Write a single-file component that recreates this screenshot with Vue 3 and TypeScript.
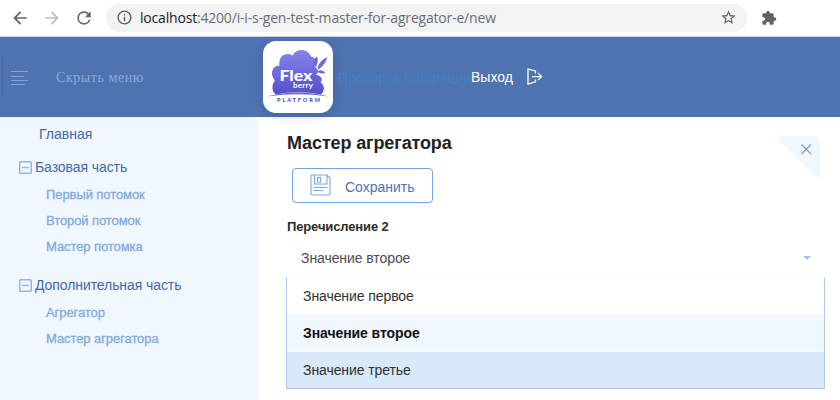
<script setup lang="ts">
interface MenuGroup {
  title: string
  key: string
  items: { label: string; key: string }[]
}

const groups: MenuGroup[] = [
  {
    title: 'Базовая часть',
    key: 'base',
    items: [
      { label: 'Первый потомок', key: 'first' },
      { label: 'Второй потомок', key: 'second' },
      { label: 'Мастер потомка', key: 'master' },
    ],
  },
  {
    title: 'Дополнительная часть',
    key: 'extra',
    items: [
      { label: 'Агрегатор', key: 'aggregator' },
      { label: 'Мастер агрегатора', key: 'aggregator-master' },
    ],
  },
]

const options = [
  { label: 'Значение первое', state: '' },
  { label: 'Значение второе', state: 'active' },
  { label: 'Значение третье', state: 'hovered' },
]
</script>

<template>
  <div class="window">
    <div class="toolbar">
      <svg class="nav-icon" viewBox="0 0 24 24"><path d="M20 11H7.83l5.59-5.59L12 4l-8 8 8 8 1.41-1.41L7.83 13H20z" /></svg>
      <svg class="nav-icon disabled" viewBox="0 0 24 24"><path d="M4 11h12.17l-5.59-5.59L12 4l8 8-8 8-1.41-1.41L16.17 13H4z" /></svg>
      <svg class="nav-icon" viewBox="0 0 24 24"><path d="M17.65 6.35A7.96 7.96 0 0 0 12 4a8 8 0 1 0 7.73 10h-2.08A6 6 0 1 1 12 6c1.66 0 3.14.69 4.22 1.78L13 11h7V4z" /></svg>
      <div class="address">
        <svg class="info" viewBox="0 0 24 24"><path d="M11 17h2v-6h-2v6zm1-15a10 10 0 1 0 0 20 10 10 0 0 0 0-20zm0 18a8 8 0 1 1 0-16 8 8 0 0 1 0 16zM11 9h2V7h-2v2z" /></svg>
        <span class="url"><b>localhost</b>:4200/i-i-s-gen-test-master-for-agregator-e/new</span>
        <svg class="star" viewBox="0 0 24 24"><path d="M22 9.24l-7.19-.62L12 2 9.19 8.63 2 9.24l5.46 4.73L5.82 21 12 17.27 18.18 21l-1.63-7.03L22 9.24zM12 15.4l-3.76 2.27 1-4.28-3.32-2.88 4.38-.38L12 6.1l1.71 4.04 4.38.38-3.32 2.88 1 4.28L12 15.4z" /></svg>
      </div>
      <svg class="puzzle" viewBox="0 0 24 24"><path d="M20.5 11H19V7a2 2 0 0 0-2-2h-4V3.5a2.5 2.5 0 0 0-5 0V5H4a2 2 0 0 0-2 2v3.8h1.5a2.7 2.7 0 0 1 0 5.4H2V20c0 1.1.9 2 2 2h3.8v-1.5a2.7 2.7 0 0 1 5.4 0V22H17a2 2 0 0 0 2-2v-4h1.5a2.5 2.5 0 0 0 0-5z" /></svg>
    </div>

    <header class="header">
      <i class="edge"></i>
      <svg class="burger" viewBox="0 0 18 16"><path d="M0 1.5h17M0 6.5h13M0 10.5h17M0 14.5h14" /></svg>
      <span class="hide-menu">Скрыть меню</span>
      <div class="logo">
        <svg viewBox="0 0 70 72">
          <defs>
            <linearGradient id="cloud" x1="0" y1="0" x2="0" y2="1">
              <stop offset="0" stop-color="#8585ee" />
              <stop offset="1" stop-color="#5450cb" />
            </linearGradient>
          </defs>
          <path fill="url(#cloud)" d="M13 53.500C9 51 8 44 12 39.500 7 34 8 25 16.500 24.500 15 15 23 10.500 29.500 14.500 33 7 45 7 48 15.500Q52 16 52.500 20L51.500 25 56 30.500 53 33.500C59 35 60 39 57.500 41.500 62 44 62 50 58 53.500Q35 49 13 53.500Z" />
          <path fill="#6d69dc" d="M50.500 24Q50 18 54 15.500Q56 19 53 26ZM54.500 26.500Q57 19 64.500 16Q62 24 55.500 28.500ZM56 29.500Q60 28.500 62.500 32Q58.500 33 55.500 31.500Z" />
          <path fill="#6a66d4" d="M3.500 55.500Q35 47.500 66 55.500Q35 51 3.500 55.500Z" />
          <text class="flex-word" x="16.500" y="39.500" textLength="33" lengthAdjust="spacingAndGlyphs">Flex</text>
          <text class="berry-word" x="30" y="47" textLength="20">berry</text>
          <text class="platform-word" x="14" y="61" textLength="43">PLATFORM</text>
        </svg>
      </div>
      <span class="app-name">Проверка генерации</span>
      <span class="logout">Выход</span>
      <svg class="exit" viewBox="0 0 18 18"><path d="M9.500 5.500V2.900L2 1.100v15l7.500-2.300v-2.300M6 8.600h9.500M12 5.100l3.700 3.500-3.700 3.500" /></svg>
    </header>

    <div class="body">
      <nav class="sidebar">
        <div class="home"><span>Главная</span></div>
        <section v-for="group in groups" :key="group.key" class="group" :class="group.key">
          <div class="group-title">
            <svg viewBox="0 0 13 13"><rect x=".75" y=".75" width="11.500" height="11.500" rx=".8" /><path d="M3 6.500h7" /></svg>
            <span>{{ group.title }}</span>
          </div>
          <div v-for="item in group.items" :key="item.key" class="item">
            <span>{{ item.label }}</span>
          </div>
        </section>
      </nav>

      <main class="form">
        <div class="heading">
          <h1><span>Мастер агрегатора</span></h1>
          <svg class="close" viewBox="0 0 43 43"><path class="corner" d="M4 1H34Q42 1 42 9V38Q42 43 38 42L2 6Q-1 1 4 1Z" /><path class="cross" d="M23.500 9.500l9.500 9.500M33 9.500l-9.500 9.500" /></svg>
        </div>
        <button class="save">
          <svg viewBox="0 0 21 22"><path d="M1.500 1H17l3 3v15.500q0 1.500-1.500 1.500h-16Q1 21 1 19.500V1.500ZM4.500 1v9H17V1M7.500 3.500h3v4.500h-3ZM3.500 13.500h14M3.500 16.500h10" /></svg>
          <span>Сохранить</span>
        </button>
        <label class="label"><span>Перечисление 2</span></label>
        <div class="select">
          <span>Значение второе</span>
          <i class="caret"></i>
        </div>
        <div class="menu">
          <div v-for="option in options" :key="option.label" class="option" :class="option.state">
            <span>{{ option.label }}</span>
          </div>
        </div>
      </main>
    </div>
  </div>
</template>

<style>
body { margin: 0; background: #fff; }
</style>

<style scoped>
* { box-sizing: border-box; }
.window { width: 840px; height: 400px; overflow: hidden; display: flex; flex-direction: column; font-family: "Liberation Sans", Arial, sans-serif; background: #fff; }
span { white-space: nowrap; }
svg { display: block; flex: none; }
.toolbar { height: 37px; flex: none; display: flex; align-items: center; padding: 0 0 1px 10px; border-bottom: 1px solid #cfd0d2; }
.nav-icon { width: 20px; height: 20px; margin-right: 12px; fill: #5f6368; }
.disabled { fill: #babcbe; }
.address { width: 641px; height: 28px; border-radius: 14px; background: #f1f3f4; display: flex; align-items: center; padding: 0 10px; }
.info { width: 17px; height: 17px; fill: #5f6368; }
.url { margin-left: 7px; color: #6a6e73; font: 14px/28px "Open Sans", "Noto Sans", sans-serif; letter-spacing: -.19px; }
.url b { font-weight: 400; color: #202124; }
.star { width: 17px; height: 17px; fill: #5f6368; margin-left: auto; }
.puzzle { width: 16px; height: 16px; fill: #5f6368; margin-left: 14px; }
.header { height: 80px; flex: none; background: #4f72b0; display: flex; align-items: center; position: relative; z-index: 1; }
.edge { width: 1px; height: 40px; background: #4667a0; margin-left: 2px; }
.burger { width: 18px; height: 16px; margin: 2px 0 0 8px; fill: none; stroke: #87a4d5; }
.hide-menu { width: 207px; margin: 2px 0 0 27px; font: 14px/18px "Liberation Serif", serif; color: #8fa9d5; letter-spacing: .57px; }
.logo { width: 70px; height: 72px; background: #fff; border-radius: 13px; box-shadow: 0 3px 9px rgba(35, 65, 130, .28); flex: none; }
.logo svg { width: 70px; height: 72px; }
.flex-word { font: 900 15px Lato, sans-serif; fill: #fff; }
.berry-word { font: 700 8px Lato, sans-serif; fill: #fff; }
.platform-word { font: 900 5.5px Lato, sans-serif; fill: #4e4ac4; }
.app-name { width: 133px; margin: 2px 0 0 5px; font-size: 14px; letter-spacing: -.04px; color: #3f82c9; }
.logout { width: 42px; font-size: 14px; color: #fff; }
.exit { width: 18px; height: 18px; margin-left: 13px; fill: none; stroke: #fff; stroke-width: 1.3; }
.body { flex: 1; display: flex; min-height: 0; }
.sidebar { width: 258px; flex: none; background: #f0f7ff; padding-top: 7px; border-top-right-radius: 5px; }
.home { height: 20px; padding-left: 39px; font-size: 14px; line-height: 20px; color: #4467ad; }
.group { padding-top: 13px; }
.group.extra { padding-top: 16px; }
.group-title { height: 20px; display: flex; align-items: center; gap: 3px; padding-left: 19px; font-size: 14px; line-height: 20px; color: #4467ad; margin-bottom: 5px; letter-spacing: -.08px; }
.group-title svg { width: 13px; height: 13px; fill: none; stroke: #91b8e5; stroke-width: 1.5; }
.group.extra .group-title { margin-top: -1px; }
.item { height: 26px; padding-left: 46px; font-size: 13px; line-height: 26px; color: #80abde; -webkit-text-stroke: .3px #80abde; letter-spacing: -.08px; }
.form { flex: 1; padding: 18px 15px 0 28px; min-width: 0; }
.heading { height: 33px; display: flex; justify-content: space-between; }
h1 { margin: -2px 0 0 1px; font-size: 18px; line-height: 20px; letter-spacing: -.12px; color: #222; }
.close { width: 43px; height: 43px; margin-right: 4px; }
.corner { fill: #f0f7ff; }
.cross { fill: none; stroke: #6d9cd9; stroke-width: 1.1; }
.save { display: flex; align-items: center; width: 141px; height: 35px; margin: 0 0 0 6px; padding: 0 0 0 17px; background: #fff; border: 1px solid #74a5dd; border-radius: 4px; font: 14px "Liberation Sans", sans-serif; color: #4f72b0; }
.save svg { width: 21px; height: 22px; margin-bottom: 2px; fill: none; stroke: #7aa9df; stroke-width: 1.1; }
.save span { margin: 3px 0 0 14px; }
.label { display: block; height: 36px; padding: 14px 0 0 1px; font-size: 13px; font-weight: 700; line-height: 20px; letter-spacing: -.13px; color: #2b2b2b; }
.select { height: 38px; padding: 0 14px 0 15px; display: flex; align-items: center; justify-content: space-between; font-size: 14px; letter-spacing: -.08px; color: #4c4c4c; }
.caret { border: 4px solid transparent; border-top-color: #a4c5ea; border-bottom: 0; }
.menu { height: 112px; width: 539px; border: 1px solid #a9c8ec; border-top-color: #f8f8f8; background: #fff; }
.option { height: 37px; padding-left: 16px; font-size: 14px; line-height: 37px; letter-spacing: -.08px; color: #303030; border-top: 1px solid #fafafa; }
.option:first-child { height: 36px; border: 0; }
.active { background: #f0f7ff; color: #111; font-weight: 700; }
.hovered { background: #dae9f9; border-top-color: #f5faff; }
</style>
